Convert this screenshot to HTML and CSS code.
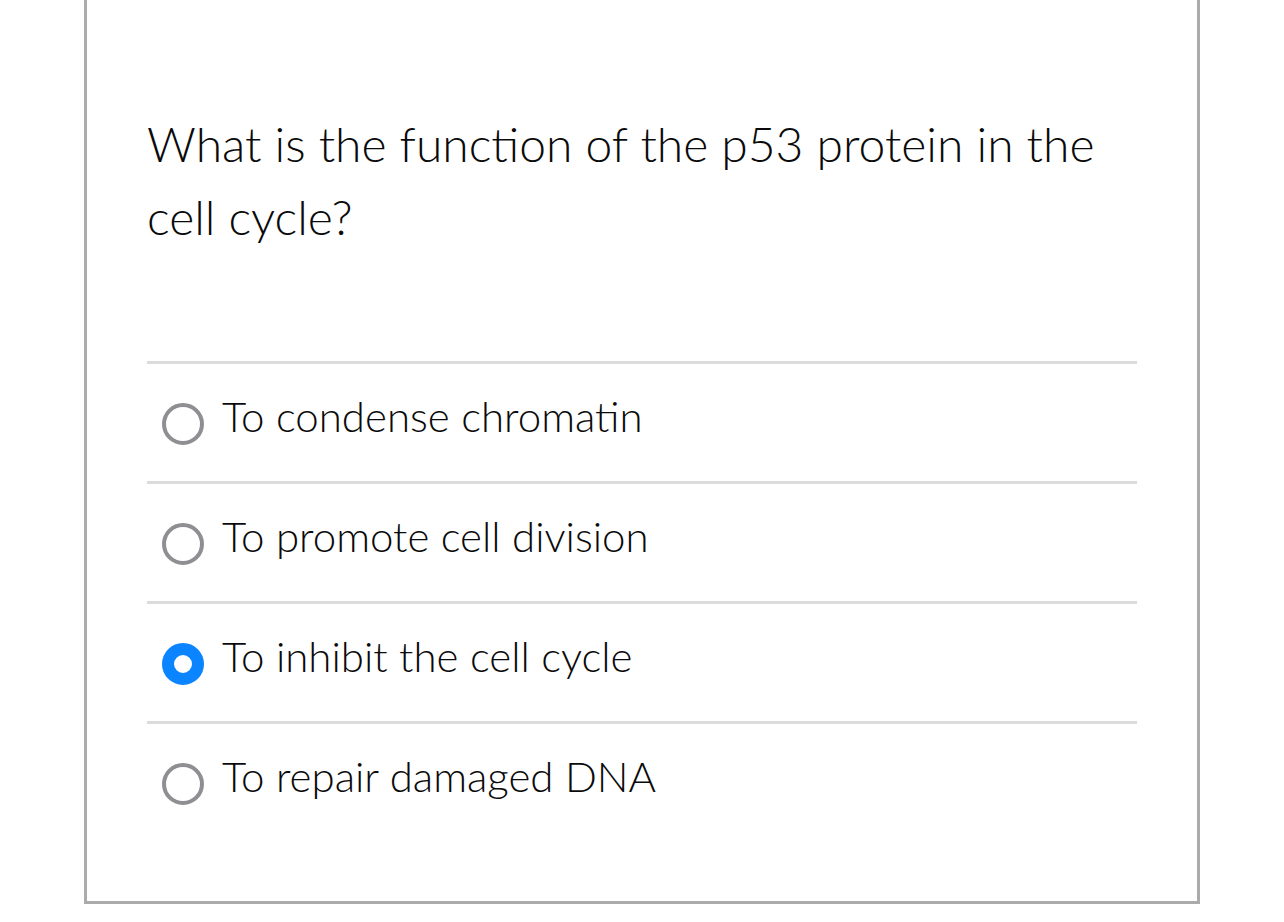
FILE: index.html
```html
<!DOCTYPE html>
<html>
<head>
<meta charset="utf-8">
<link rel="stylesheet" href="styles.css">
</head>
<body>
<div class="card">
  <h1 class="question">What is the function of the p53 protein in the cell cycle?</h1>
  <ul class="options">
    <li class="option"><span class="radio"></span><span class="label">To condense chromatin</span></li>
    <li class="option"><span class="radio"></span><span class="label">To promote cell division</span></li>
    <li class="option"><span class="radio checked"></span><span class="label">To inhibit the cell cycle</span></li>
    <li class="option"><span class="radio"></span><span class="label">To repair damaged DNA</span></li>
  </ul>
</div>
</body>
</html>
```

FILE: styles.css
```css
html, body {
  margin: 0;
  padding: 0;
  background: #ffffff;
}
body {
  font-family: "Lato", "Noto Sans", sans-serif;
  font-weight: 300;
  color: #0a0a0a;
}
.card {
  box-sizing: border-box;
  margin-left: 84px;
  width: 1116px;
  border: 3px solid #ababab;
  border-top: none;
  padding: 107px 60px 60px 60px;
}
.question {
  margin: 0 0 108px 0;
  font-size: 48px;
  font-weight: 300;
  line-height: 73px;
}
.options {
  list-style: none;
  margin: 0;
  padding: 0;
}
.option {
  display: flex;
  align-items: center;
  height: 117px;
  border-top: 3px solid #dcdcdc;
  padding-left: 15px;
  gap: 18px;
}
.radio {
  box-sizing: border-box;
  width: 42px;
  height: 42px;
  flex: none;
  border-radius: 50%;
  border: 4px solid #8e8e93;
  background: #fff;
  margin-top: 2px;
}
.radio.checked {
  border: 12px solid #0a84ff;
}
.label {
  font-size: 42px;
  line-height: 48px;
  padding-bottom: 14px;
}
```
